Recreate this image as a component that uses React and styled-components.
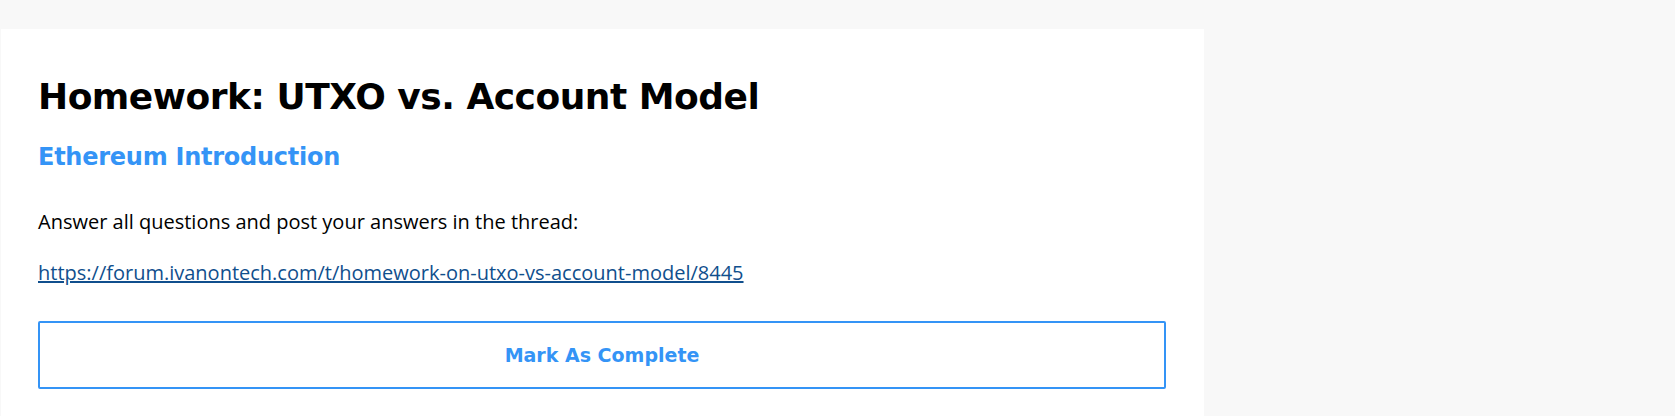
import React from 'react';
import styled, { createGlobalStyle } from 'styled-components';

const GlobalStyle = createGlobalStyle`
  html, body {
    margin: 0;
    padding: 0;
    background: #f8f8f8;
  }
`;

const Page = styled.div`
  height: 416px;
  overflow: hidden;
  padding-top: 29px;
  padding-left: 1px;
  box-sizing: border-box;
`;

const Card = styled.section`
  width: 1203px;
  min-height: 420px;
  background: #fff;
  padding: 45px 38px 40px 37px;
  box-sizing: border-box;
`;

const Title = styled.h1`
  margin: 0;
  font-family: 'DejaVu Sans', sans-serif;
  font-weight: 700;
  font-size: 36px;
  letter-spacing: -0.5px;
  line-height: 46px;
  color: #000;
`;

const Subtitle = styled.h2`
  margin: 22px 0 0;
  font-family: 'DejaVu Sans', sans-serif;
  font-weight: 700;
  font-size: 24px;
  letter-spacing: -0.25px;
  line-height: 30px;
  color: #3494f6;
`;

const Text = styled.p`
  margin: ${({ $gap }) => $gap}px 0 0;
  font-family: 'Open Sans', sans-serif;
  font-size: 20px;
  line-height: 30px;
  color: #000;
`;

const Link = styled.a`
  color: #104f8d;
  text-decoration: underline;
`;

const CompleteButton = styled.button`
  display: block;
  width: 100%;
  height: 68px;
  margin-top: 33px;
  background: #fff;
  border: 2px solid #3494f6;
  border-radius: 2px;
  font-family: 'DejaVu Sans', sans-serif;
  font-weight: 700;
  font-size: 19px;
  color: #3494f6;
  cursor: pointer;
`;

export default function App() {
  return (
    <Page>
      <GlobalStyle />
      <Card>
        <Title>Homework: UTXO vs. Account Model</Title>
        <Subtitle>Ethereum Introduction</Subtitle>
        <Text $gap={35}>Answer all questions and post your answers in the thread:</Text>
        <Text $gap={21}>
          <Link href="#">https://forum.ivanontech.com/t/homework-on-utxo-vs-account-model/8445</Link>
        </Text>
        <CompleteButton>Mark As Complete</CompleteButton>
      </Card>
    </Page>
  );
}
